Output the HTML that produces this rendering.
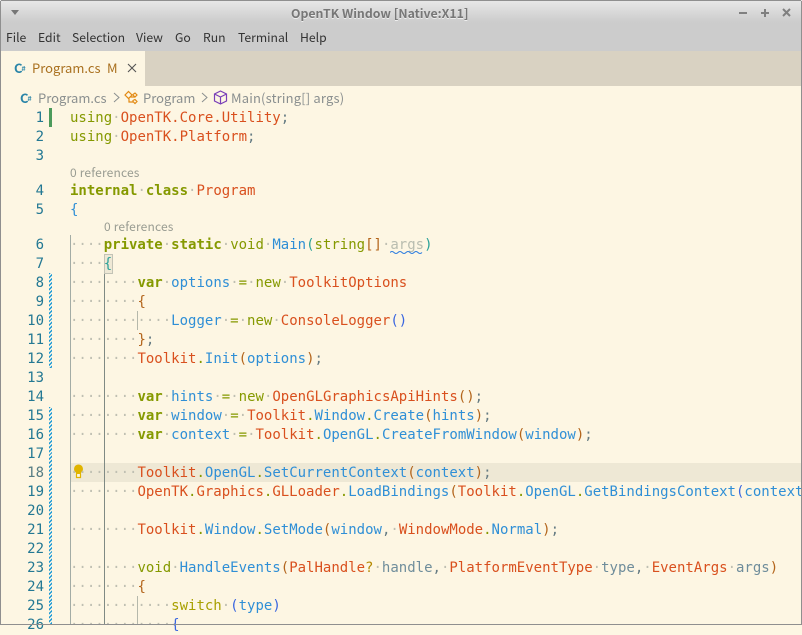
<!DOCTYPE html>
<html><head><meta charset="utf-8"><style>
html,body{margin:0;padding:0;width:802px;height:625px;overflow:hidden;background:#fdf6e3}
div,span.a,svg.a{position:absolute}
.ui{font-family:"Noto Sans CJK JP","Liberation Sans",sans-serif;font-size:13px;line-height:18px;white-space:pre}
.m{top:28px;color:#333;font-size:12.2px}
.l{position:absolute;left:70px;margin-top:1px;height:19px;line-height:19px;font-family:"DejaVu Sans Mono",monospace;font-size:14px;white-space:pre;color:#657b83}
.n{position:absolute;left:0;margin-top:1px;width:44px;text-align:right;height:19px;line-height:19px;font-family:"DejaVu Sans Mono",monospace;font-size:14px;color:#237893}
.w{color:#bfbfb2}.k{color:#859900;font-weight:bold}.v{color:#859900}.o{color:#d9501e}.b{color:#2f8fd6}.p{color:#b3651c}.t{color:#2aa198}.u{color:#3a66e0}.d{color:#859900}.g{color:#6f8d9b}.f{color:#b9bdb0}.s{color:#657b83}
.c{position:absolute;left:70px;height:16px;line-height:16px;font-family:"Noto Sans CJK JP","Liberation Sans",sans-serif;font-size:12px;letter-spacing:.17px;color:#999c92}
.gd{width:3px;background:repeating-linear-gradient(135deg,#1d9ad6 0,#1d9ad6 1.4px,#fdf6e3 1.4px,#fdf6e3 2.8px)}
</style></head><body>
<div style="left:0;top:0;width:802px;height:25px;background:linear-gradient(#e8e8e8,#cdcdcd 85%,#cccccc)"></div>
<div style="left:0;top:25px;width:802px;height:26px;background:#cccccc"></div>
<div style="left:0;top:51px;width:802px;height:35px;background:#d9d2c2"></div>
<div style="left:1px;top:51px;width:144px;height:35px;background:#fdf6e3"></div>
<div class="ui" style="left:291px;top:4px;font-size:12.3px;font-weight:bold;color:#777;text-shadow:0 1px 0 #eee">OpenTK Window [Native:X11]</div>
<svg class="a" style="left:10px;top:9px" width="10" height="8"><path d="M1 1h8L5 6z" fill="#777"/></svg>
<svg class="a" style="left:735px;top:6px" width="60" height="14" fill="none" stroke="#808080" stroke-width="2"><path d="M4 7h8M26 7h8M30 3v8M48 3l7 7M55 3l-7 7"/></svg>
<div class="ui m" style="left:6px">File</div><div class="ui m" style="left:38px">Edit</div><div class="ui m" style="left:72px">Selection</div><div class="ui m" style="left:136px">View</div><div class="ui m" style="left:175px">Go</div><div class="ui m" style="left:203px">Run</div><div class="ui m" style="left:238px">Terminal</div><div class="ui m" style="left:300px">Help</div>
<div class="ui" style="left:14px;top:59px;color:#2b85a8;font-weight:bold;font-size:13px">C<span style="font-size:7px;position:relative;top:-2px;left:-1px">#</span></div>
<div class="ui" style="left:32px;top:59px;color:#a9701f">Program.cs</div>
<div class="ui" style="left:107px;top:59px;color:#a9701f">M</div>
<svg class="a" style="left:126px;top:62px" width="12" height="12" fill="none" stroke="#555" stroke-width="1.1"><path d="M2 2l8 8M10 2l-8 8"/></svg>
<div class="ui" style="left:20px;top:89px;color:#2b85a8;font-weight:bold">C<span style="font-size:7px;position:relative;top:-2px;left:-1px">#</span></div>
<div class="ui" style="left:38px;top:89px;color:#8a8f8f">Program.cs</div>
<svg class="a" style="left:112px;top:91px" width="10" height="13" fill="none" stroke="#8a8f8f"><path d="M2 2l5 4.5-5 4.5"/></svg>
<svg class="a" style="left:124px;top:90px" width="15" height="15" fill="none" stroke="#e28a14" stroke-width="1.2"><path d="M1 5l3.5-3.5L8 5 4.500 8.500zM6 7h4.500M9 4.500l2-1.500 2 2-2 2-2-2zM5 8.500V12h4M9 10.500l2-1 2 2-2 2-2-2z"/></svg>
<div class="ui" style="left:143px;top:89px;color:#8a8f8f">Program</div>
<svg class="a" style="left:200px;top:91px" width="10" height="13" fill="none" stroke="#8a8f8f"><path d="M2 2l5 4.500-5 4.500"/></svg>
<svg class="a" style="left:213px;top:90px" width="15" height="15" fill="none" stroke="#7a3fb8" stroke-width="1.200"><path d="M7.500 1l6 3v7l-6 3-6-3V4zM1.500 4l6 3 6-3M7.500 7v7"/></svg>
<div class="ui" style="left:231px;top:89px;color:#8a8f8f;letter-spacing:.17px">Main(string[] args)</div>

<div style="left:70px;top:463px;width:731px;height:19px;background:#eee8d5"></div>
<div style="left:70px;top:235px;width:1px;height:390px;background:#a3aca5"></div>
<div style="left:104px;top:273px;width:1px;height:352px;background:#7f8a84"></div>
<div style="left:137px;top:311px;width:1px;height:19px;background:#b5b8ab"></div>
<div style="left:137px;top:596px;width:1px;height:29px;background:#b5b8ab"></div>
<div style="left:104px;top:254px;width:7px;height:18px;border:1px solid #c3c3b6;background:#eee8d5"></div>
<div style="left:49px;top:108px;width:3px;height:19px;background:#4c9a5b"></div>
<div class="gd" style="left:49px;top:273px;height:95px"></div>
<div class="gd" style="left:49px;top:407px;height:218px"></div>
<svg class="a" style="left:73px;top:464px" width="11" height="15"><path d="M5.500 0.500a4.500 4.500 0 0 1 2.500 8.200V10H3V8.700A4.500 4.500 0 0 1 5.500 0.500z" fill="#e0b400"/><path d="M3.500 10v3.500h4V10" fill="#fdf6e3" stroke="#e0b400" stroke-width="1.200"/></svg>

<div class="n" style="top:108px">1</div><div class="n" style="top:127px">2</div><div class="n" style="top:146px">3</div><div class="n" style="top:181px">4</div><div class="n" style="top:200px">5</div>
<div class="n" style="top:235px">6</div><div class="n" style="top:254px">7</div><div class="n" style="top:273px">8</div><div class="n" style="top:292px">9</div><div class="n" style="top:311px">10</div><div class="n" style="top:330px">11</div><div class="n" style="top:349px">12</div><div class="n" style="top:368px">13</div><div class="n" style="top:387px">14</div><div class="n" style="top:406px">15</div><div class="n" style="top:425px">16</div><div class="n" style="top:444px">17</div><div class="n" style="top:463px;color:#567c83">18</div><div class="n" style="top:482px">19</div><div class="n" style="top:501px">20</div><div class="n" style="top:520px">21</div><div class="n" style="top:539px">22</div><div class="n" style="top:558px">23</div><div class="n" style="top:577px">24</div><div class="n" style="top:596px">25</div><div class="n" style="top:615px">26</div>

<div class="l" style="top:108px"><span class="v">using</span><span class="w">·</span><span class="o">OpenTK.Core.Utility</span>;</div>
<div class="l" style="top:127px"><span class="v">using</span><span class="w">·</span><span class="o">OpenTK.Platform</span>;</div>
<div class="c" style="top:165px">0 references</div>
<div class="l" style="top:181px"><span class="k">internal</span><span class="w">·</span><span class="k">class</span><span class="w">·</span><span class="o">Program</span></div>
<div class="l" style="top:200px"><span class="b">{</span></div>
<div class="c" style="top:219px;left:104px">0 references</div>
<div class="l" style="top:235px"><span class="w">····</span><span class="k">private</span><span class="w">·</span><span class="k">static</span><span class="w">·</span><span class="v">void</span><span class="w">·</span><span class="b">Main</span><span class="t">(</span><span class="v">string</span><span class="p">[]</span><span class="w">·</span><span class="f">args</span><span class="t">)</span></div>
<svg class="a" style="left:390px;top:251px" width="34" height="4" fill="none" stroke="#2f7fe0"><path d="M0 1.500q2-2 4 0t4 0 4 0 4 0 4 0 4 0 4 0 4 0"/></svg>
<div class="l" style="top:254px"><span class="w">····</span><span class="t">{</span></div>
<div class="l" style="top:273px"><span class="w">········</span><span class="k">var</span><span class="w">·</span><span class="b">options</span><span class="w">·</span><span class="v">=</span><span class="w">·</span><span class="v">new</span><span class="w">·</span><span class="o">ToolkitOptions</span></div>
<div class="l" style="top:292px"><span class="w">········</span><span class="p">{</span></div>
<div class="l" style="top:311px"><span class="w">············</span><span class="b">Logger</span><span class="w">·</span><span class="v">=</span><span class="w">·</span><span class="v">new</span><span class="w">·</span><span class="o">ConsoleLogger</span><span class="u">()</span></div>
<div class="l" style="top:330px"><span class="w">········</span><span class="p">}</span>;</div>
<div class="l" style="top:349px"><span class="w">········</span><span class="o">Toolkit</span><span class="d">.</span><span class="b">Init</span><span class="p">(</span><span class="b">options</span><span class="p">)</span>;</div>
<div class="l" style="top:387px"><span class="w">········</span><span class="k">var</span><span class="w">·</span><span class="b">hints</span><span class="w">·</span><span class="v">=</span><span class="w">·</span><span class="v">new</span><span class="w">·</span><span class="o">OpenGLGraphicsApiHints</span><span class="p">()</span>;</div>
<div class="l" style="top:406px"><span class="w">········</span><span class="k">var</span><span class="w">·</span><span class="b">window</span><span class="w">·</span><span class="v">=</span><span class="w">·</span><span class="o">Toolkit</span><span class="d">.</span><span class="b">Window</span><span class="d">.</span><span class="b">Create</span><span class="p">(</span><span class="b">hints</span><span class="p">)</span>;</div>
<div class="l" style="top:425px"><span class="w">········</span><span class="k">var</span><span class="w">·</span><span class="b">context</span><span class="w">·</span><span class="v">=</span><span class="w">·</span><span class="o">Toolkit</span><span class="d">.</span><span class="b">OpenGL</span><span class="d">.</span><span class="b">CreateFromWindow</span><span class="p">(</span><span class="b">window</span><span class="p">)</span>;</div>
<div class="l" style="top:463px"><span class="w">········</span><span class="o">Toolkit</span><span class="d">.</span><span class="b">OpenGL</span><span class="d">.</span><span class="b">SetCurrentContext</span><span class="p">(</span><span class="b">context</span><span class="p">)</span>;</div>
<div class="l" style="top:482px;width:731px;overflow:hidden"><span class="w">········</span><span class="o">OpenTK</span><span class="d">.</span><span class="o">Graphics</span><span class="d">.</span><span class="o">GLLoader</span><span class="d">.</span><span class="b">LoadBindings</span><span class="p">(</span><span class="o">Toolkit</span><span class="d">.</span><span class="b">OpenGL</span><span class="d">.</span><span class="b">GetBindingsContext</span><span class="u">(</span><span class="b">context</span></div>
<div class="l" style="top:520px"><span class="w">········</span><span class="o">Toolkit</span><span class="d">.</span><span class="b">Window</span><span class="d">.</span><span class="b">SetMode</span><span class="p">(</span><span class="b">window</span>,<span class="w">·</span><span class="o">WindowMode</span><span class="d">.</span><span class="b">Normal</span><span class="p">)</span>;</div>
<div class="l" style="top:558px"><span class="w">········</span><span class="v">void</span><span class="w">·</span><span class="b">HandleEvents</span><span class="p">(</span><span class="o">PalHandle</span><span style="color:#b58900">?</span><span class="w">·</span><span class="g">handle</span>,<span class="w">·</span><span class="o">PlatformEventType</span><span class="w">·</span><span class="g">type</span>,<span class="w">·</span><span class="o">EventArgs</span><span class="w">·</span><span class="g">args</span><span class="p">)</span></div>
<div class="l" style="top:577px"><span class="w">········</span><span class="p">{</span></div>
<div class="l" style="top:596px"><span class="w">············</span><span class="v" style="color:#a8a000">switch</span><span class="w">·</span><span class="u">(</span><span class="b">type</span><span class="u">)</span></div>
<div class="l" style="top:615px"><span class="w">············</span><span class="u">{</span></div>

<div style="left:0;top:1px;width:1px;height:624px;background:#8f8f8f"></div>
<div style="left:801px;top:1px;width:1px;height:624px;background:#8f8f8f"></div>
<div style="left:0;top:624px;width:802px;height:1px;background:#8f8f8f"></div>
<div style="left:1px;top:0;width:800px;height:1px;background:#8f8f8f"></div>
</body></html>
